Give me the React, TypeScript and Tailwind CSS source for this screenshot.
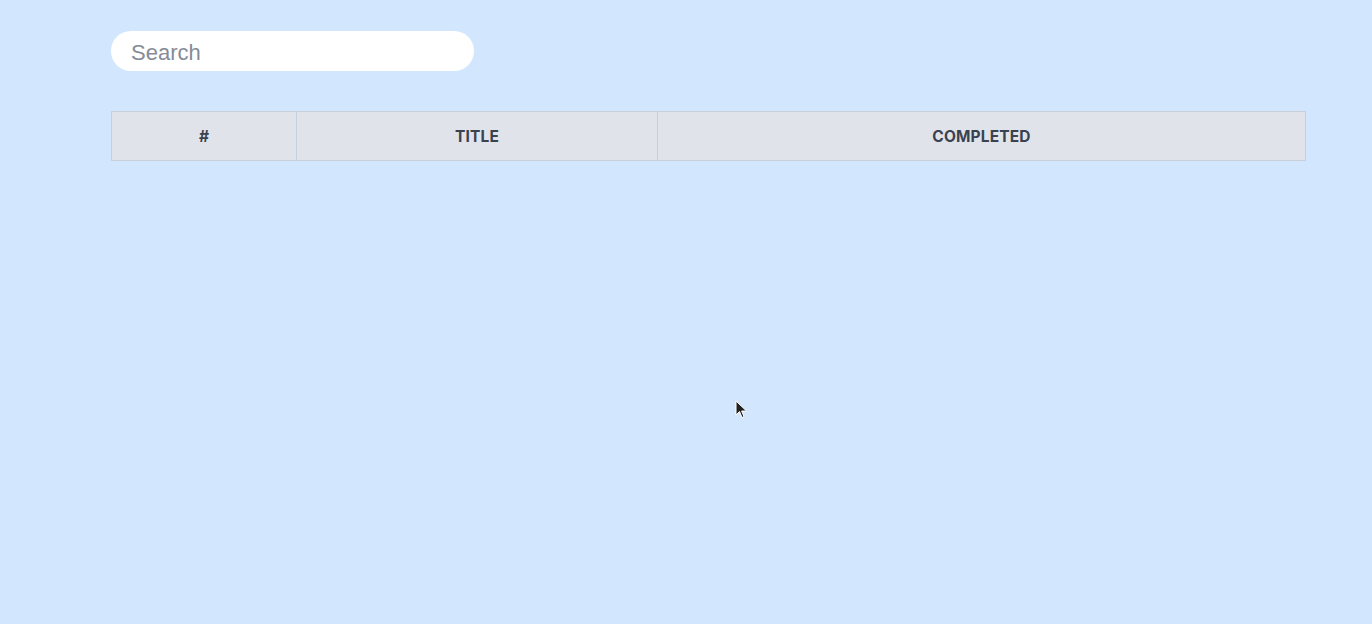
const COLUMNS = [
  { key: 'id', label: '#', width: 'w-[184px]' },
  { key: 'title', label: 'Title', width: 'w-[361px]' },
  { key: 'completed', label: 'Completed', width: 'flex-1' },
]

export default function App() {
  return (
    <div className="relative min-h-[624px] bg-[#d2e7fe] pl-[111px] pt-[31px] font-['Liberation_Sans',Arial,sans-serif]">
      {/* Search */}
      <input
        type="text"
        placeholder="Search"
        className="block h-[40px] w-[363px] rounded-full bg-white px-5 pt-[3px] text-[22px] text-gray-700 outline-none placeholder:text-[#858b97]"
      />

      {/* Table header */}
      <div className="mt-[40px] flex h-[50px] w-[1195px] border border-[#c8d0dc] bg-[#e1e3ea]">
        {COLUMNS.map((c, i) => (
          <div
            key={c.key}
            className={`${c.width} flex items-center justify-center pt-[2px] ${i > 0 ? 'border-l border-[#c8d0dc]' : ''}`}
          >
            <span className="font-['Inter',sans-serif] text-[15.5px] font-bold uppercase tracking-[0.01em] text-[#3a4250]">
              {c.label}
            </span>
          </div>
        ))}
      </div>

      {/* mouse cursor */}
      <svg className="absolute left-[735px] top-[400px]" width="13" height="19" viewBox="0 0 13 19">
        <path d="M1 1 L1 15 L4.5 11.5 L7 17.5 L9 16.6 L6.6 11 L11.5 11 Z" fill="#222" stroke="#fff" strokeWidth="1" />
      </svg>
    </div>
  )
}
